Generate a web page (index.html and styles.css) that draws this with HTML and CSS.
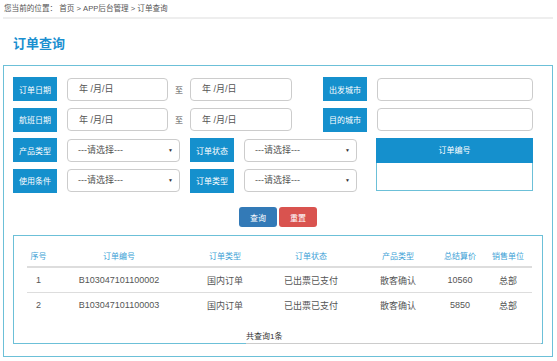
FILE: index.html
```html
<!DOCTYPE html>
<html lang="zh-CN">
<head>
    <meta charset="UTF-8">
    <meta name="viewport" content="width=device-width, initial-scale=1.0">
    <title>订单查询</title>
    <link rel="stylesheet" href="styles.css">
</head>
<body>
    <div class="page">
        <div class="crumb">您当前的位置： 首页 &gt; APP后台管理 &gt; 订单查询</div>
        <div class="title">订单查询</div>
        <div class="panel">
            <div class="form">
                <div class="row">
                    <div class="label">订单日期</div>
                    <input class="field date" type="text" placeholder="年 /月/日">
                    <span class="to">至</span>
                    <input class="field date2" type="text" placeholder="年 /月/日">
                    <div class="label city-label">出发城市</div>
                    <input class="field city" type="text">
                </div>
                <div class="row">
                    <div class="label">航班日期</div>
                    <input class="field date" type="text" placeholder="年 /月/日">
                    <span class="to">至</span>
                    <input class="field date2" type="text" placeholder="年 /月/日">
                    <div class="label city-label">目的城市</div>
                    <input class="field city" type="text">
                </div>
                <div class="split">
                    <div class="split-left">
                        <div class="row">
                            <div class="label">产品类型</div>
                            <div class="select">---请选择---<span class="arrow">▼</span></div>
                            <div class="label">订单状态</div>
                            <div class="select">---请选择---<span class="arrow">▼</span></div>
                        </div>
                        <div class="row">
                            <div class="label">使用条件</div>
                            <div class="select">---请选择---<span class="arrow">▼</span></div>
                            <div class="label">订单类型</div>
                            <div class="select">---请选择---<span class="arrow">▼</span></div>
                        </div>
                    </div>
                    <div class="order-no">
                        <div class="order-no-head">订单编号</div>
                        <textarea class="order-no-body"></textarea>
                    </div>
                </div>
            </div>
            <div class="actions">
                <button class="btn btn-search">查询</button>
                <button class="btn btn-reset">重置</button>
            </div>
            <div class="result">
                <table>
                    <thead>
                        <tr>
                            <th class="c1">序号</th>
                            <th class="c2">订单编号</th>
                            <th class="c3">订单类型</th>
                            <th class="c4">订单状态</th>
                            <th class="c5">产品类型</th>
                            <th class="c6">总结算价</th>
                            <th class="c7">销售单位</th>
                        </tr>
                    </thead>
                    <tbody>
                        <tr>
                            <td>1</td>
                            <td>B103047101100002</td>
                            <td>国内订单</td>
                            <td>已出票已支付</td>
                            <td>散客确认</td>
                            <td>10560</td>
                            <td>总部</td>
                        </tr>
                        <tr>
                            <td>2</td>
                            <td>B103047101100003</td>
                            <td>国内订单</td>
                            <td>已出票已支付</td>
                            <td>散客确认</td>
                            <td>5850</td>
                            <td>总部</td>
                        </tr>
                    </tbody>
                </table>
                <div class="total">共查询1条</div>
            </div>
        </div>
    </div>
</body>
</html>
```

FILE: styles.css
```css
body {
    margin: 0;
    font-family: "Liberation Sans", "Noto Sans CJK SC", sans-serif;
    color: #555;
    background: #fff;
}
.page {
    margin: 0 4px 0 3px;
}
.crumb {
    height: 17px;
    line-height: 17px;
    font-size: 7.6px;
    color: #555;
    padding-left: 1px;
    border-bottom: 2px solid #eee;
}
.title {
    padding: 4px 0 0 10px;
    height: 42px;
    line-height: 42px;
    font-size: 13px;
    font-weight: bold;
    color: #1a8fd0;
}
.panel {
    box-sizing: border-box;
    height: 292px;
    border: 1px solid #6cc0d8;
    padding: 11px 9px 12px;
}
.form {
    display: flex;
    flex-direction: column;
    gap: 6.5px;
}
.row {
    display: flex;
    align-items: center;
    height: 24px;
}
.label {
    flex: none;
    width: 44px;
    height: 24px;
    display: flex;
    align-items: center;
    justify-content: center;
    background: #1590cd;
    color: #fff;
    font-size: 8px;
    margin-right: 10px;
}
.field {
    box-sizing: border-box;
    height: 23px;
    border: 1px solid #ccc;
    border-radius: 4px;
    background: #fff;
    padding: 0 0 0 11px;
    font-family: inherit;
    font-size: 9px;
    color: #555;
    outline: none;
}
.field::placeholder {
    color: #555;
}
.date {
    width: 101px;
}
.date2 {
    width: 102px;
}
.to {
    width: 22px;
    text-align: center;
    font-size: 8px;
    color: #555;
}
.city-label {
    margin-left: 31px;
}
.city {
    width: 156px;
}
.split {
    display: flex;
}
.split-left {
    display: flex;
    flex-direction: column;
    gap: 6.5px;
}
.select {
    box-sizing: border-box;
    position: relative;
    width: 113px;
    height: 23px;
    line-height: 21px;
    border: 1px solid #ccc;
    border-radius: 4px;
    padding-left: 10px;
    font-size: 9px;
    color: #555;
    margin-right: 10px;
}
.select:last-child {
    margin-right: 0;
}
.arrow {
    position: absolute;
    right: 6px;
    top: 0;
    font-size: 5px;
    color: #333;
}
.order-no {
    margin-left: 19px;
    width: 157px;
    height: 53px;
    display: flex;
    flex-direction: column;
}
.order-no-head {
    height: 25px;
    line-height: 25px;
    text-align: center;
    background: #1590cd;
    color: #fff;
    font-size: 8px;
}
.order-no-body {
    flex: 1;
    box-sizing: border-box;
    margin: 0;
    border: 1px solid #6cc0d8;
    border-top: none;
    resize: none;
    outline: none;
}
.actions {
    display: flex;
    justify-content: center;
    gap: 2px;
    margin-top: 14.5px;
}
.btn {
    width: 38px;
    height: 20px;
    border: none;
    border-radius: 3px;
    color: #fff;
    font-family: inherit;
    font-size: 8px;
    padding: 0;
    cursor: pointer;
}
.btn-search {
    background: #337ab7;
}
.btn-reset {
    background: #d9534f;
}
.result {
    box-sizing: border-box;
    height: 109px;
    margin-top: 8px;
    border: 1px solid #6cc0d8;
    padding: 9px 10px 0 13px;
}
table {
    width: 505px;
    border-collapse: collapse;
    table-layout: fixed;
}
th {
    height: 21px;
    padding: 0;
    font-size: 8px;
    font-weight: normal;
    color: #3d9fd6;
    border-bottom: 2px solid #ddd;
}
td {
    height: 24px;
    padding: 0;
    text-align: center;
    font-size: 9px;
    color: #555;
    border-bottom: 1px solid #ddd;
}
tbody tr:last-child td {
    border-bottom: none;
}
.c1 { width: 23px; }
.c2 { width: 138px; }
.c3 { width: 74px; }
.c4 { width: 98px; }
.c5 { width: 76px; }
.c6 { width: 48px; }
.c7 { width: 48px; }
.total {
    margin: 14px -9px 0 219px;
    height: 12px;
    line-height: 12px;
    font-size: 8px;
    color: #333;
    border-bottom: 1px solid #ccc;
}
```
